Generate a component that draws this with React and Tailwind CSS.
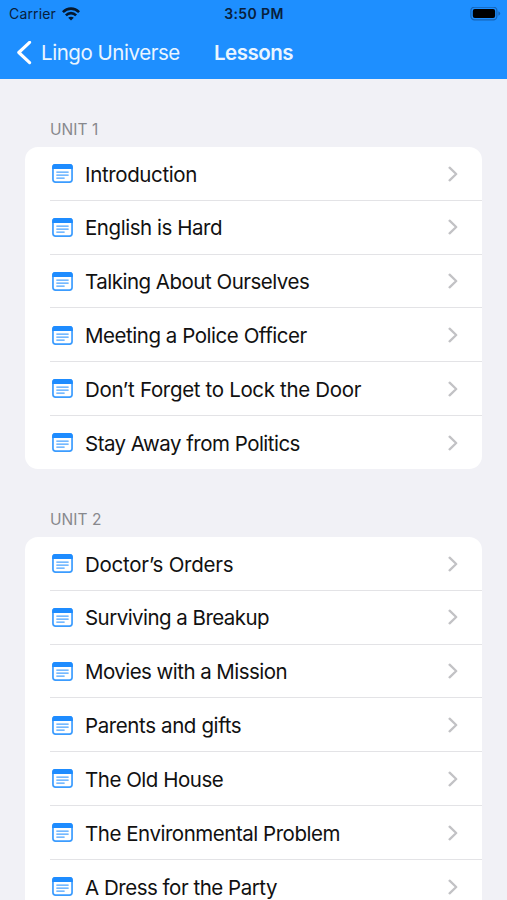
const units = [
  {
    title: "UNIT 1",
    lessons: [
      { name: "Introduction", tracking: "tracking-[-0.37px]" },
      { name: "English is Hard", tracking: "tracking-[-0.45px]" },
      { name: "Talking About Ourselves", tracking: "tracking-[-0.5px]" },
      { name: "Meeting a Police Officer", tracking: "tracking-[-0.46px]" },
      { name: "Don’t Forget to Lock the Door", tracking: "tracking-[-0.33px]" },
      { name: "Stay Away from Politics", tracking: "tracking-[-0.52px]" },
    ],
  },
  {
    title: "UNIT 2",
    lessons: [
      { name: "Doctor’s Orders", tracking: "tracking-[-0.26px]" },
      { name: "Surviving a Breakup", tracking: "tracking-[-0.54px]" },
      { name: "Movies with a Mission", tracking: "tracking-[-0.55px]" },
      { name: "Parents and gifts", tracking: "tracking-[-0.39px]" },
      { name: "The Old House", tracking: "tracking-[-0.48px]" },
      { name: "The Environmental Problem", tracking: "tracking-[-0.47px]" },
      { name: "A Dress for the Party", tracking: "tracking-[-0.48px]" },
    ],
  },
];

function LessonIcon() {
  return (
    <svg className="h-[19px] w-[21px] shrink-0" viewBox="0 0 21 19" fill="none">
      <rect x="0.95" y="0.95" width="19.1" height="17.1" rx="2.6" stroke="#3b9cff" strokeWidth="1.7" />
      <path d="M0.2 5.1V3A2.9 2.9 0 0 1 3.1 0.1H17.9A2.9 2.9 0 0 1 20.8 3V5.1Z" fill="#1e8cff" />
      <path d="M4.8 8.1H16.2M4.8 11.1H16.2M4.8 14.1H12.2" stroke="#4aa3ff" strokeWidth="1.3" strokeLinecap="round" />
    </svg>
  );
}

function Chevron() {
  return (
    <svg className="h-4 w-[10px] shrink-0" viewBox="0 0 10 16" fill="none">
      <path d="M1.6 1.7L8.2 8L1.6 14.3" stroke="#c2c2c5" strokeWidth="2.3" strokeLinecap="round" strokeLinejoin="round" />
    </svg>
  );
}

function LessonRow({ name, tracking, last }) {
  return (
    <li className={`flex pl-[25px] ${last ? "h-[53px]" : "h-[53.8px]"}`}>
      <div className={`flex grow items-center pl-[2px] pr-6 pt-[0.5px] ${last ? "" : "border-b border-[#e3e3e6]"}`}>
        <LessonIcon />
        <span className={`ml-3 grow whitespace-nowrap pt-[2px] text-[20.5px] leading-6 text-[#111] ${tracking}`}>{name}</span>
        <Chevron />
      </div>
    </li>
  );
}

function StatusBar() {
  return (
    <div className="flex h-[27px] items-center justify-between pl-[9px] pr-[6px] text-[#08203c]">
      <div className="flex w-40 items-center gap-[6px]">
        <span className="text-[14px] leading-4 tracking-[0.15px]">Carrier</span>
        <svg className="h-[14px] w-[18px]" viewBox="0 0 18 14" fill="none" stroke="#06182d" strokeWidth="2.6">
          <path d="M0.9 5.1C5.4 0.4 12.6 0.4 17.1 5.1" />
          <path d="M3.9 8.3C6.8 5.4 11.2 5.4 14.1 8.3" />
          <path d="M9 13.5L6.2 10.7C7.8 9.3 10.2 9.3 11.8 10.7Z" fill="#06182d" stroke="none" />
        </svg>
      </div>
      <span className="mr-[2px] text-[14px] font-semibold leading-4 tracking-[0.4px]">3:50 PM</span>
      <div className="flex w-40 justify-end">
        <svg className="h-[14px] w-[31px]" viewBox="0 0 31 14">
          <rect x="0.9" y="0.2" width="26" height="12.6" rx="3.6" fill="none" stroke="#1764b5" strokeWidth="1.2" />
          <rect x="2.8" y="2" width="22.3" height="9" rx="2" fill="#000" />
          <path d="M28.4 4.3Q30.2 5.1 30.2 6.5Q30.2 7.9 28.4 8.7Z" fill="#1764b5" />
        </svg>
      </div>
    </div>
  );
}

export default function App() {
  return (
    <div className="h-[900px] w-[507px] overflow-hidden bg-[#f1f1f6] font-['Inter','Liberation_Sans',sans-serif]">
      <header className="h-[79px] bg-[#1e8fff]">
        <StatusBar />
        <div className="flex h-[51px] items-center pl-[17px] text-[#eaf5ff]">
          <svg className="h-6 w-[15px]" viewBox="0 0 15 24" fill="none">
            <path d="M12.6 1.3L1.8 11.5L12.6 21.7" stroke="#fff" strokeWidth="3.1" strokeLinecap="round" strokeLinejoin="round" />
          </svg>
          <span className="ml-[9px] w-[173px] whitespace-nowrap text-[20.5px] leading-6 tracking-[-0.46px]">Lingo Universe</span>
          <h1 className="whitespace-nowrap text-[20.5px] font-semibold leading-6 tracking-[-0.5px]">Lessons</h1>
        </div>
      </header>
      <main className="flex flex-col px-[25px]">
        {units.map((unit) => (
          <section key={unit.title} className="flex flex-col">
            <h2 className="flex h-[68px] items-end pb-2 pl-[25px] text-[15.5px] leading-[18px] tracking-[0.05px] text-[#88888d]">{unit.title}</h2>
            <ul className="overflow-hidden rounded-[13px] bg-white">
              {unit.lessons.map((lesson, i) => (
                <LessonRow key={lesson.name} {...lesson} last={i === unit.lessons.length - 1} />
              ))}
            </ul>
          </section>
        ))}
      </main>
    </div>
  );
}
